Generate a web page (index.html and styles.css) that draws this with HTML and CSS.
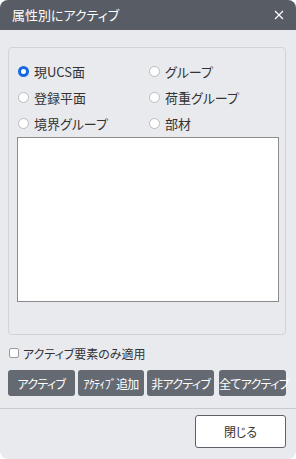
FILE: index.html
```html
<!DOCTYPE html>
<html>
<head>
<meta charset="utf-8">
<title>属性別にアクティブ</title>
<link rel="stylesheet" href="styles.css">
</head>
<body>
<div class="dialog">
    <header class="titlebar">
        <span class="title">属性別にアクティブ</span>
        <svg class="close-x" width="10" height="10" viewBox="0 0 10 10">
            <path d="M1 1L9 9M9 1L1 9" stroke="#ffffff" stroke-width="1.2" fill="none"/>
        </svg>
    </header>
    <div class="content">
        <div class="panel">
            <ul class="options">
                <li><span class="radio checked"></span>現UCS面</li>
                <li><span class="radio"></span>グループ</li>
                <li><span class="radio"></span>登録平面</li>
                <li><span class="radio"></span>荷重グループ</li>
                <li><span class="radio"></span>境界グループ</li>
                <li><span class="radio"></span>部材</li>
            </ul>
            <div class="listbox"></div>
        </div>
        <label class="only-active"><span class="checkbox"></span>アクティブ要素のみ適用</label>
        <div class="actions">
            <button class="btn">アクティブ</button>
            <button class="btn">ｱｸﾃｨﾌﾞ追加</button>
            <button class="btn">非アクティブ</button>
            <button class="btn last">全てアクティブ</button>
        </div>
    </div>
    <footer class="footer">
        <button class="btn-close">閉じる</button>
    </footer>
</div>
</body>
</html>
```
FILE: styles.css
```css
body {
    margin: 0;
    background-color: #ffffff;
    font-family: "Noto Sans CJK JP", "Noto Sans", sans-serif;
    font-feature-settings: "palt";
}
.dialog {
    width: 296px;
    height: 459px;
    background-color: #e9eaee;
    border-radius: 8px;
    overflow: hidden;
    display: flex;
    flex-direction: column;
}
.titlebar {
    height: 30px;
    background-color: #585d65;
    color: #ffffff;
    display: flex;
    align-items: center;
    justify-content: space-between;
    padding: 0 12px 0 12px;
    flex-shrink: 0;
}
.title {
    font-size: 13px;
    line-height: 16px;
}
.close-x {
    display: block;
}
.content {
    padding: 17px 10px 0 8px;
}
.panel {
    box-sizing: border-box;
    height: 288px;
    border: 1px solid #d2d3d7;
    border-radius: 4px;
    padding: 10px 6px 0 8px;
}
.options {
    margin: 0;
    padding: 0;
    list-style: none;
    display: grid;
    grid-template-columns: 131px 1fr;
}
.options li {
    height: 26px;
    display: flex;
    align-items: center;
    font-size: 13px;
    color: #333333;
}
.radio {
    width: 9px;
    height: 9px;
    border: 1px solid #b9bbbf;
    border-radius: 50%;
    background-color: #ffffff;
    margin: 0 5px 0 1px;
    flex-shrink: 0;
}
.radio.checked {
    width: 5px;
    height: 5px;
    border: 3px solid #1668e3;
}
.listbox {
    margin-top: 1px;
    height: 163px;
    background-color: #ffffff;
    border: 1px solid #8c8c8c;
}
.only-active {
    display: flex;
    align-items: center;
    height: 14px;
    margin-top: 11px;
    padding-left: 1px;
    font-size: 12px;
    color: #333333;
}
.checkbox {
    width: 8px;
    height: 8px;
    border: 1px solid #9a9a9e;
    border-radius: 2px;
    background-color: #ffffff;
    margin-right: 4px;
}
.actions {
    display: flex;
    gap: 3px;
    margin-top: 10px;
}
.btn {
    width: 67px;
    height: 26px;
    border: none;
    border-radius: 3px;
    background-color: #656a72;
    color: #ffffff;
    font-family: "Noto Sans CJK JP", "Noto Sans", sans-serif;
    font-feature-settings: "palt";
    font-size: 12px;
    letter-spacing: -0.7px;
    padding: 0;
    white-space: nowrap;
}
.btn.last {
    margin-left: 2px;
}
.footer {
    margin-top: 12px;
    border-top: 1px solid #c9cacf;
    display: flex;
    justify-content: flex-end;
    padding: 6px 10px 0 0;
}
.btn-close {
    width: 91px;
    height: 33px;
    background-color: #ffffff;
    border: 1px solid #5d6168;
    border-radius: 3px;
    font-family: "Noto Sans CJK JP", "Noto Sans", sans-serif;
    font-feature-settings: "palt";
    font-size: 12px;
    color: #333333;
}
```
